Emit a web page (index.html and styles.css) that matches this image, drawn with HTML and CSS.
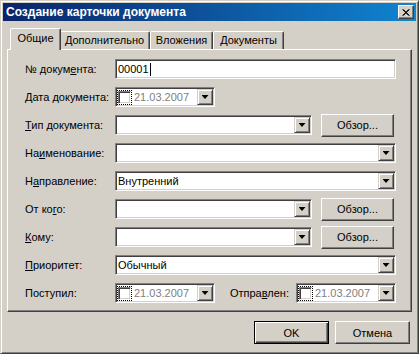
FILE: index.html
```html
<!DOCTYPE html>
<html lang="ru">
<head>
    <meta charset="UTF-8">
    <meta name="viewport" content="width=device-width, initial-scale=1.0">
    <title>Создание карточки документа</title>
    <link rel="stylesheet" href="styles.css">
</head>
<body>
    <div class="window">
        <div class="titlebar">
            <span class="title">Создание карточки документа</span>
            <button class="close-btn" type="button">
                <svg width="8" height="7" viewBox="0 0 8 7"><path d="M0.5 0.5L7.5 6.5M1.5 0.5L6.5 6.5M7.5 0.5L0.5 6.5M6.5 0.5L1.5 6.5" stroke="#000" stroke-width="1"/></svg>
            </button>
        </div>

        <div class="dialog-body">
            <div class="tabs">
                <div class="tab tab-general tab-active">Общие</div>
                <div class="tab tab-extra">Дополнительно</div>
                <div class="tab tab-attach">Вложения</div>
                <div class="tab tab-docs">Документы</div>
            </div>

            <div class="panel">
                <div class="row">
                    <label class="label">№ докум<u>е</u>нта:</label>
                    <div class="field field-full">00001<span class="caret"></span></div>
                </div>
                <div class="row">
                    <label class="label"><u>Д</u>ата документа:</label>
                    <div class="field date-field">
                        <span class="check-wrap"><span class="check"></span></span>
                        <span class="date-text">21.03.2007</span>
                        <span class="drop-btn"></span>
                    </div>
                </div>
                <div class="row">
                    <label class="label"><u>Т</u>ип документа:</label>
                    <div class="field combo-short"><span class="drop-btn"></span></div>
                    <button class="btn browse-btn" type="button">Обзор...</button>
                </div>
                <div class="row">
                    <label class="label">На<u>и</u>менование:</label>
                    <div class="field field-full"><span class="drop-btn"></span></div>
                </div>
                <div class="row">
                    <label class="label">Н<u>а</u>правление:</label>
                    <div class="field field-full">Внутренний<span class="drop-btn"></span></div>
                </div>
                <div class="row">
                    <label class="label">От ко<u>г</u>о:</label>
                    <div class="field combo-short"><span class="drop-btn"></span></div>
                    <button class="btn browse-btn" type="button">Обзор...</button>
                </div>
                <div class="row">
                    <label class="label"><u>К</u>ому:</label>
                    <div class="field combo-short"><span class="drop-btn"></span></div>
                    <button class="btn browse-btn" type="button">Обзор...</button>
                </div>
                <div class="row">
                    <label class="label"><u>П</u>риоритет:</label>
                    <div class="field field-full">Обычный<span class="drop-btn"></span></div>
                </div>
                <div class="row">
                    <label class="label">Поступил:</label>
                    <div class="field date-field">
                        <span class="check-wrap"><span class="check"></span></span>
                        <span class="date-text">21.03.2007</span>
                        <span class="drop-btn"></span>
                    </div>
                    <label class="label label-sent">Отпра<u>в</u>лен:</label>
                    <div class="field date-field">
                        <span class="check-wrap"><span class="check"></span></span>
                        <span class="date-text">21.03.2007</span>
                        <span class="drop-btn"></span>
                    </div>
                </div>
            </div>

            <div class="footer">
                <button class="btn btn-default" type="button">OK</button>
                <button class="btn" type="button">Отмена</button>
            </div>
        </div>
    </div>
</body>
</html>
```

FILE: styles.css
```css
body {
    margin: 0;
    padding: 0;
    font-family: "Liberation Sans", Arial, sans-serif;
    font-size: 11px;
    color: #000;
    background-color: #d4d0c8;
}
.window {
    width: 419px;
    height: 354px;
    box-sizing: border-box;
    background-color: #d4d0c8;
    border: 1px solid;
    border-color: #d4d0c8 #404040 #404040 #d4d0c8;
    box-shadow: inset 1px 1px #fff, inset -1px -1px #808080;
    padding: 2px;
    display: flex;
    flex-direction: column;
}
.titlebar {
    height: 18px;
    flex: none;
    display: flex;
    align-items: center;
    justify-content: space-between;
    padding: 0 2px 0 3px;
    background: linear-gradient(to right, #0a246a, #1084d0);
}
.title {
    color: #fff;
    font-weight: bold;
    font-size: 12px;
}
.close-btn {
    width: 16px;
    height: 14px;
    padding: 0;
    box-sizing: border-box;
    background-color: #d4d0c8;
    border: 1px solid;
    border-color: #fff #404040 #404040 #fff;
    box-shadow: inset -1px -1px #808080;
    display: flex;
    align-items: center;
    justify-content: center;
}
.dialog-body {
    padding: 7px 4px 0 4px;
}
.tabs {
    display: flex;
    align-items: flex-end;
    height: 21px;
    padding-left: 5px;
}
.tab {
    height: 18px;
    box-sizing: border-box;
    padding-top: 2px;
    text-align: center;
    border-top: 1px solid #fff;
    border-left: 1px solid #fff;
    border-right: 1px solid #404040;
    box-shadow: inset -1px 0 #808080;
    border-radius: 2px 2px 0 0;
    white-space: nowrap;
}
.tab-general {
    width: 47px;
}
.tab-extra {
    width: 91px;
}
.tab-attach {
    width: 63px;
}
.tab-docs {
    width: 71px;
}
.tab-active {
    position: relative;
    z-index: 1;
    width: 51px;
    height: 22px;
    margin: 0 -2px -1px;
    padding-top: 3px;
    background-color: #d4d0c8;
}
.panel {
    height: 263px;
    box-sizing: border-box;
    border: 1px solid;
    border-color: #fff #404040 #404040 #fff;
    box-shadow: inset -1px -1px #808080;
    padding: 9px 15px 0 17px;
}
.row {
    display: flex;
    align-items: center;
    height: 20px;
    margin-bottom: 8px;
}
.label {
    width: 90px;
    flex: none;
    white-space: nowrap;
}
.label-sent {
    width: auto;
    margin-left: auto;
    margin-right: 7px;
}
.field {
    height: 20px;
    box-sizing: border-box;
    display: flex;
    align-items: center;
    padding-left: 2px;
    background-color: #fff;
    border: 1px solid;
    border-color: #808080 #fff #fff #808080;
    box-shadow: inset 1px 1px #404040, inset -1px -1px #d4d0c8;
    white-space: nowrap;
}
.field-full {
    flex: 1;
}
.combo-short {
    width: 197px;
}
.date-field {
    width: 100px;
    padding-left: 1px;
}
.caret {
    width: 1px;
    height: 13px;
    margin-left: 1px;
    background-color: #000;
}
.drop-btn {
    width: 16px;
    height: 16px;
    margin-left: auto;
    margin-right: 1px;
    box-sizing: border-box;
    background-color: #d4d0c8;
    border: 1px solid;
    border-color: #d4d0c8 #404040 #404040 #d4d0c8;
    box-shadow: inset 1px 1px #fff, inset -1px -1px #808080;
    display: flex;
    align-items: center;
    justify-content: center;
}
.drop-btn::after {
    content: "";
    width: 7px;
    height: 4px;
    background-color: #000;
    clip-path: polygon(0 0, 100% 0, 50% 100%);
}
.check-wrap {
    display: flex;
    border: 1px dotted #000;
}
.check {
    width: 13px;
    height: 13px;
    box-sizing: border-box;
    background-color: #fff;
    border: 1px solid;
    border-color: #808080 #fff #fff #808080;
    box-shadow: inset 1px 1px #404040, inset -1px -1px #d4d0c8;
}
.date-text {
    margin-left: 2px;
    color: #808080;
}
.btn {
    height: 23px;
    box-sizing: border-box;
    padding: 0;
    font-family: inherit;
    font-size: 11px;
    color: #000;
    background-color: #d4d0c8;
    border: 1px solid;
    border-color: #fff #404040 #404040 #fff;
    box-shadow: inset -1px -1px #808080;
}
.browse-btn {
    width: 73px;
    flex: none;
    margin-left: 9px;
}
.footer {
    display: flex;
    justify-content: flex-end;
    gap: 6px;
    margin-top: 9px;
    padding-right: 2px;
}
.footer .btn {
    width: 75px;
}
.btn-default {
    border: 1px solid #000;
    box-shadow: inset 1px 1px #fff, inset -1px -1px #404040, inset -2px -2px #808080;
}
```
